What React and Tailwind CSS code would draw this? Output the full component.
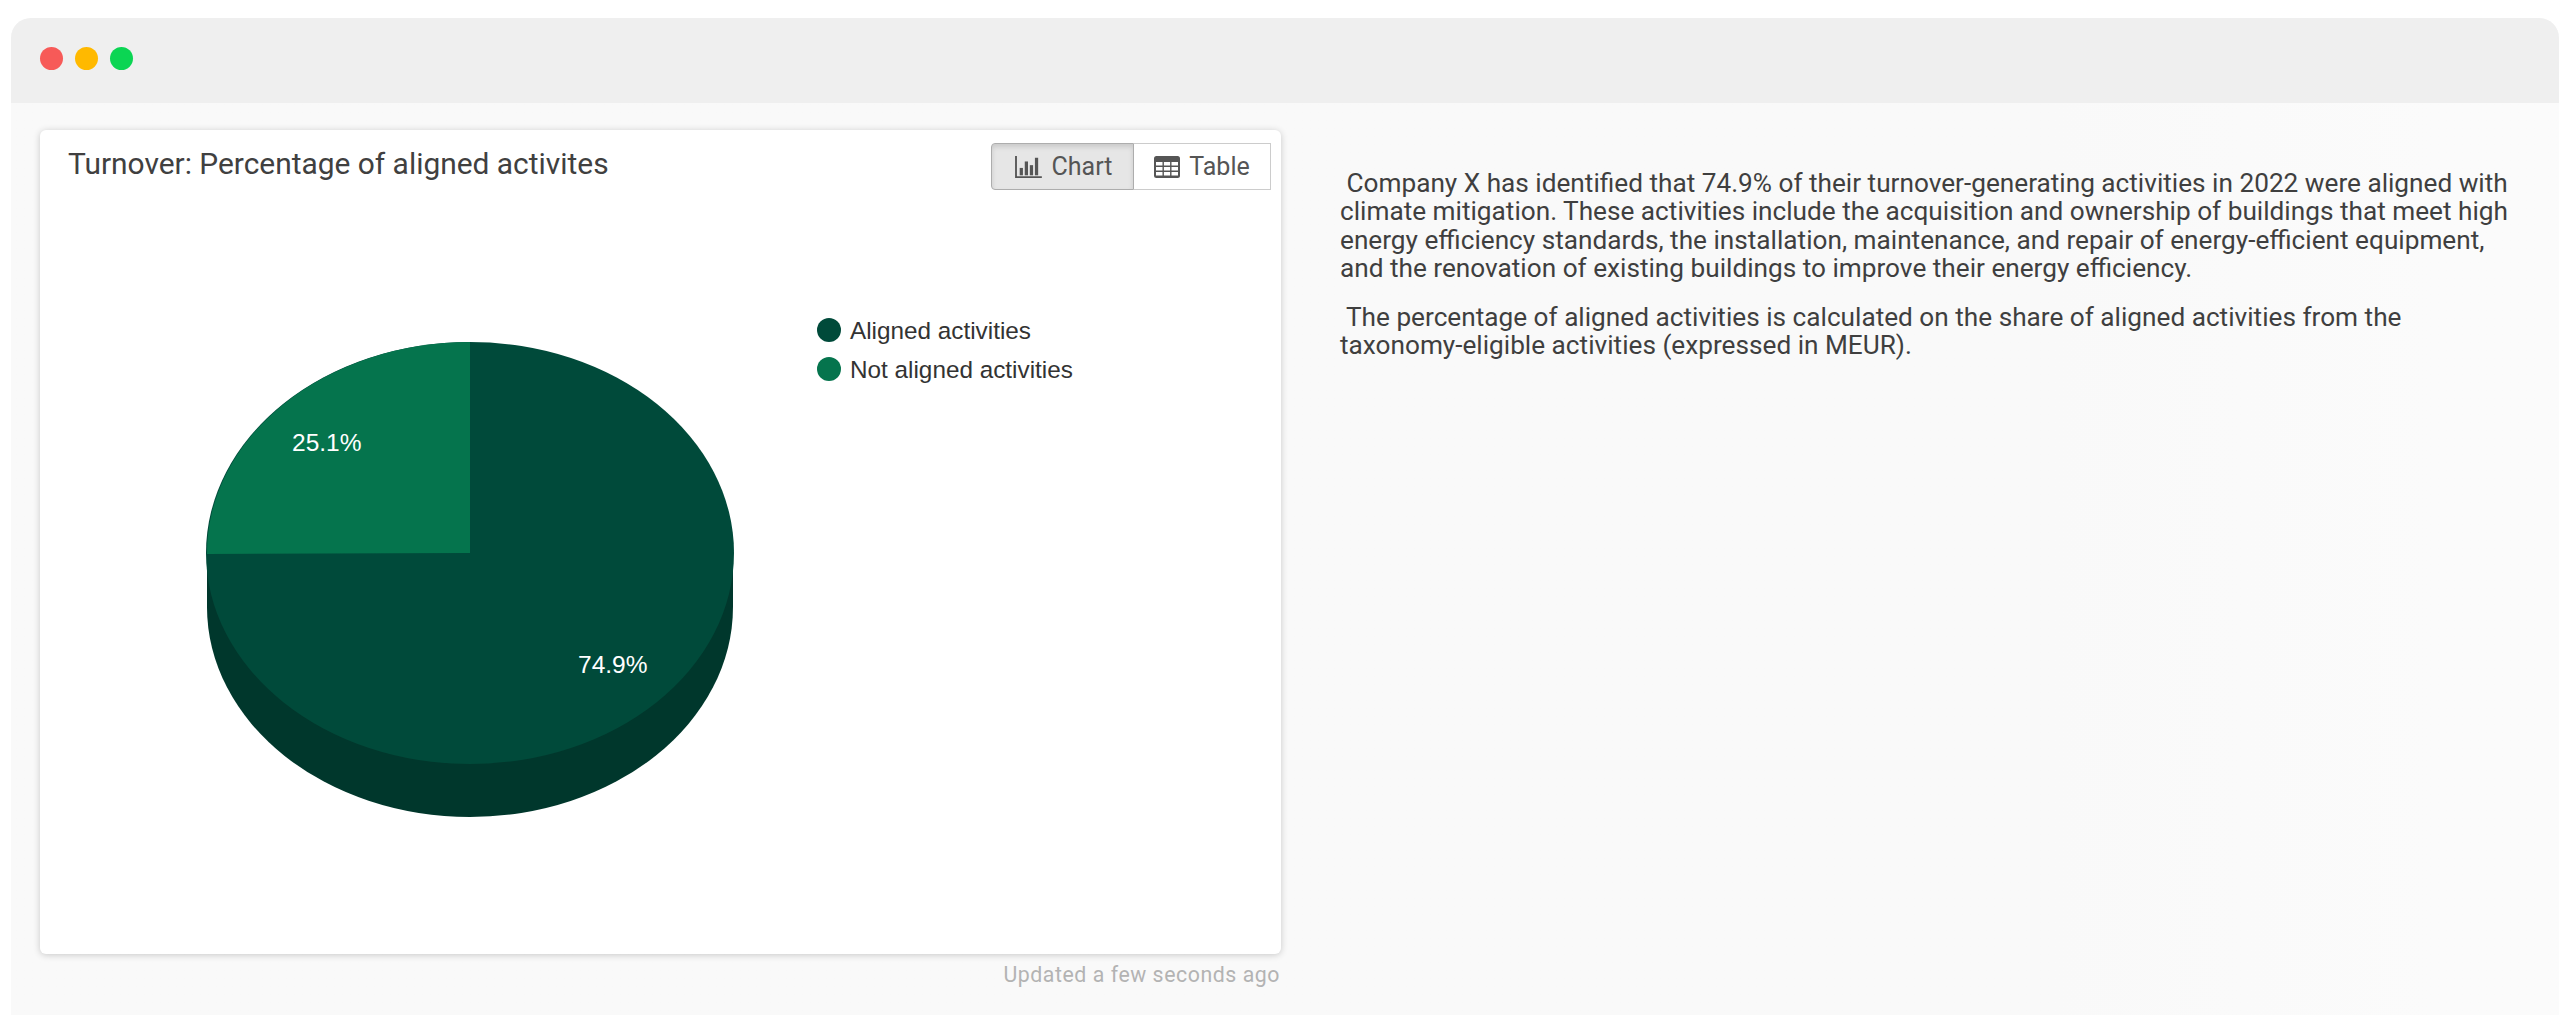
function ChartIcon() {
  return (
    <svg viewBox="0 0 30 26" className="h-[24px] w-[30px]" fill="#555">
      <path d="M1 1h2v22h27v2H1z" />
      <rect x="6" y="14" width="3.5" height="8" />
      <rect x="11.5" y="7" width="3.5" height="15" />
      <rect x="17" y="11" width="3.5" height="11" />
      <rect x="22.5" y="3" width="3.5" height="19" />
    </svg>
  );
}

function TableIcon() {
  return (
    <svg viewBox="0 0 26 22" className="h-[22px] w-[26px]">
      <rect x="0" y="0" width="26" height="22" rx="2.5" fill="#555" />
      <path
        d="M2 6h6.5v3.5H2zM9.9 6h6.2v3.5H9.9zM17.5 6H24v3.5h-6.5zM2 11h6.5v3.5H2zM9.9 11h6.2v3.5H9.9zM17.5 11H24v3.5h-6.5zM2 16h6.5v3.5H2zM9.9 16h6.2v3.5H9.9zM17.5 16H24v3.5h-6.5z"
        fill="#fff"
      />
    </svg>
  );
}

function Pie() {
  return (
    <svg className="block" width="1241" height="750" viewBox="40 204 1241 750" fontFamily="'Liberation Sans', Arial, sans-serif">
      <path d="M207 553v54a263 210 0 0 0 526 0v-54z" fill="#00372c" />
      <ellipse cx="470" cy="553" rx="264" ry="211" fill="#004a3a" />
      <path d="M470 553V342A263 211 0 0 0 207 554z" fill="#05744d" />
      <text x="292" y="451" fontSize="24.5" fill="#fff">25.1%</text>
      <text x="578" y="673" fontSize="24.5" fill="#fff">74.9%</text>
      <circle cx="829" cy="330" r="12" fill="#004a3a" />
      <text x="850" y="339" fontSize="24.3" fill="#333">Aligned activities</text>
      <circle cx="829" cy="369" r="12" fill="#05744d" />
      <text x="850" y="378" fontSize="24.3" fill="#333">Not aligned activities</text>
    </svg>
  );
}

export default function App() {
  return (
    <div className="h-[1018px] overflow-hidden bg-white pt-[18px] pl-[11px] font-['Roboto',sans-serif]">
      <div className="w-[2548px] h-[997px] bg-linear-to-r from-[#f9f9f9] from-80% to-[#fbfbfb] to-95% rounded-t-[20px] overflow-hidden">
        <div className="h-[85px] bg-[#efefef] flex items-center gap-[12px] pl-[29px] pb-[4px]">
          <span className="w-[23px] h-[23px] rounded-full bg-[#f75a58]" />
          <span className="w-[23px] h-[23px] rounded-full bg-[#ffb900]" />
          <span className="w-[23px] h-[23px] rounded-full bg-[#0bd553]" />
        </div>
        <div className="flex pt-[27px] pl-[29px]">
          <div className="w-[1241px] shrink-0">
            <div className="h-[824px] bg-white rounded-[6px] shadow-[0_1px_7px_rgba(0,0,0,0.2)]">
              <div className="h-[74px] flex justify-between pl-[28px] pr-[10px] pt-[13px]">
                <h2 className="text-[29.9px] leading-[42px] font-normal text-[#404040]">Turnover: Percentage of aligned activites</h2>
                <div className="flex h-[47px] text-[25px] text-[#555]">
                  <button type="button" className="w-[143px] flex items-center justify-center gap-[9px] bg-[#e6e6e6] border border-[#adadad] rounded-l-[4px] shadow-[inset_0_3px_5px_rgba(0,0,0,0.125)]">
                    <ChartIcon />
                    Chart
                  </button>
                  <button type="button" className="w-[137px] flex items-center justify-center gap-[9px] bg-white border border-[#ccc] border-l-0">
                    <TableIcon />
                    Table
                  </button>
                </div>
              </div>
              <Pie />
            </div>
            <p className="mt-[6px] text-right pr-[1px] text-[21.3px] leading-[30px] tracking-[0.55px] text-[#b3b3b3]">Updated a few seconds ago</p>
          </div>
          <div className="ml-[59px] w-[1170px] pt-[39px] text-[26.2px] leading-[28.4px] text-[#3f3f3f]">
            <p className="mb-[20px]">
              <span className="whitespace-pre"> </span>Company X has identified that 74.9% of their turnover-generating activities in 2022 were aligned with climate mitigation. These activities include the acquisition and ownership of buildings that meet high energy efficiency standards, the installation, maintenance, and repair of energy-efficient equipment, and the renovation of existing buildings to improve their energy efficiency.
            </p>
            <p>
              <span className="whitespace-pre"> </span>The percentage of aligned activities is calculated on the share of aligned activities from the taxonomy-eligible activities (expressed in MEUR).
            </p>
          </div>
        </div>
      </div>
    </div>
  );
}
